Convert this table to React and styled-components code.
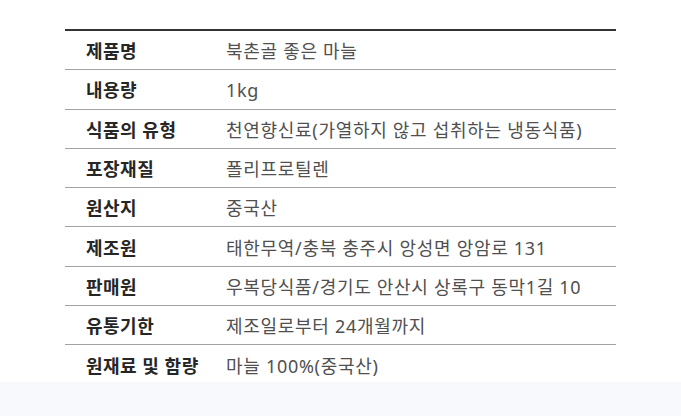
import React from "react";
import styled, { createGlobalStyle } from "styled-components";

const Global = createGlobalStyle`
  html, body { margin: 0; padding: 0; background: #f8f9fd; }
  body { font-family: "Noto Sans", "Noto Sans CJK KR", sans-serif; }
`;

const Section = styled.div`
  background: #ffffff;
  padding: 29px 0 0 65px;
  height: 382px;
  box-sizing: border-box;
`;

const Table = styled.div`
  width: 551px;
  border-top: 2px solid #333333;
  border-bottom: 3px solid #333333;
  background: #fff;
`;

const Row = styled.div`
  display: flex;
  align-items: center;
  height: 39.3px;
  padding-top: 2px;
  box-sizing: border-box;
  border-bottom: ${(p) => (p.$last ? "none" : "1.5px solid #a3a3a3")};
`;

const Label = styled.div`
  width: 161px;
  padding-left: 21px;
  box-sizing: border-box;
  font-size: 18px;
  font-weight: 700;
  color: #262626;
  letter-spacing: 0.5px;
  line-height: 1;
`;

const Value = styled.div`
  font-size: 18px;
  color: #505050;
  letter-spacing: 0.7px;
  line-height: 1;
`;

const rows = [
  ["제품명", "북촌골 좋은 마늘"],
  ["내용량", "1kg"],
  ["식품의 유형", "천연향신료(가열하지 않고 섭취하는 냉동식품)"],
  ["포장재질", "폴리프로틸렌"],
  ["원산지", "중국산"],
  ["제조원", "태한무역/충북 충주시 앙성면 앙암로 131"],
  ["판매원", "우복당식품/경기도 안산시 상록구 동막1길 10"],
  ["유통기한", "제조일로부터 24개월까지"],
  ["원재료 및 함량", "마늘 100%(중국산)"],
];

export default function App() {
  return (
    <>
      <Global />
      <Section>
        <Table>
          {rows.map(([k, v], i) => (
            <Row key={k} $last={i === rows.length - 1}>
              <Label>{k}</Label>
              <Value>{v}</Value>
            </Row>
          ))}
        </Table>
      </Section>
    </>
  );
}
